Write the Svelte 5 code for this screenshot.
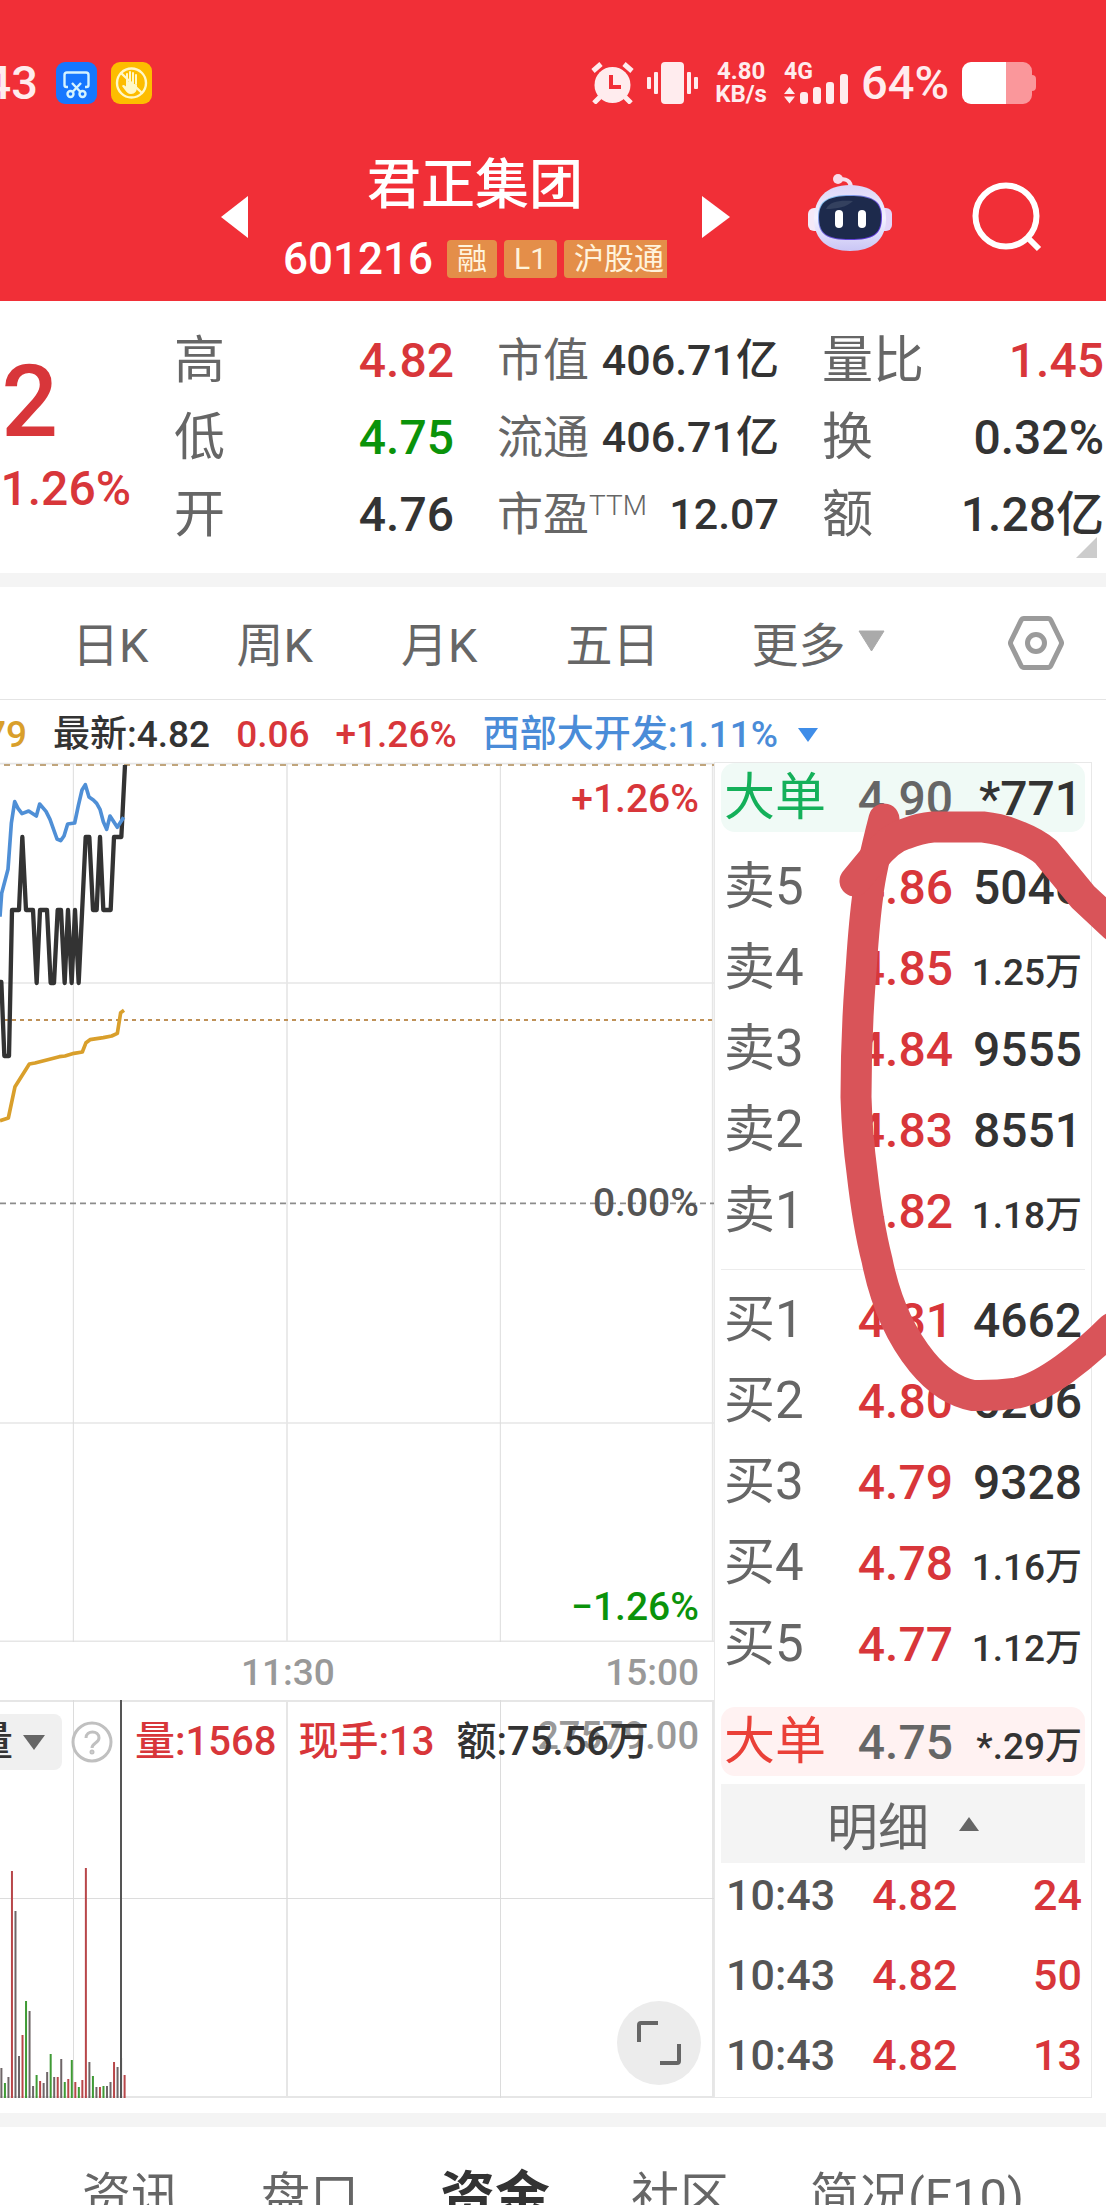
<script>
	const badges = ['融', 'L1', '沪股通'];

	const quote = [
		[
			{ label: '高', value: '4.82', tone: 'up' },
			{ label: '低', value: '4.75', tone: 'down' },
			{ label: '开', value: '4.76' }
		],
		[
			{ label: '市值', value: '406.71亿' },
			{ label: '流通', value: '406.71亿' },
			{ label: '市盈', sup: 'TTM', value: '12.07' }
		],
		[
			{ label: '量比', value: '1.45', tone: 'up' },
			{ label: '换', value: '0.32%' },
			{ label: '额', value: '1.28亿' }
		]
	];

	const periods = ['日K', '周K', '月K', '五日'];

	const asks = [
		['卖5', '4.86', '5046'],
		['卖4', '4.85', '1.25万'],
		['卖3', '4.84', '9555'],
		['卖2', '4.83', '8551'],
		['卖1', '4.82', '1.18万']
	];

	const bids = [
		['买1', '4.81', '4662'],
		['买2', '4.80', '5206'],
		['买3', '4.79', '9328'],
		['买4', '4.78', '1.16万'],
		['买5', '4.77', '1.12万']
	];

	const trades = [
		['10:43', '4.82', '24'],
		['10:43', '4.82', '50'],
		['10:43', '4.82', '13']
	];

	// one entry per minute: r = up, g = down, n = flat
	const volume = [
		['n', 30], ['g', 15], ['n', 21], ['r', 227], ['n', 187], ['n', 42], ['r', 63], ['g', 97],
		['n', 87], ['n', 12], ['g', 23], ['r', 17], ['n', 15], ['n', 26], ['g', 44], ['n', 21],
		['r', 21], ['n', 39], ['g', 16], ['r', 19], ['g', 38], ['r', 16], ['g', 11], ['r', 18],
		['r', 230], ['n', 36], ['g', 22], ['n', 11], ['r', 11], ['g', 12], ['n', 12], ['n', 16],
		['r', 36], ['n', 31], ['n', 40], ['r', 23]
	];
	const fills = { r: '#b8474a', g: '#3f9a35', n: '#6f6668' };

	const sections = ['资讯', '盘口', '资金', '社区', '简况(F10)'];
	let section = $state('资金');
</script>

{#snippet book(rows)}
	<table class="book">
		<tbody>
			{#each rows as [level, price, amount]}
				<tr>
					<th scope="row">{level}</th>
					<td class="up">{price}</td>
					<td class:small={amount.endsWith('万')}>{amount}</td>
				</tr>
			{/each}
		</tbody>
	</table>
{/snippet}

<div class="page">
	<header>
		<div class="status">
			<div class="clock"><span>10:43</span></div>
			<svg class="app-icon" width="41" height="42" viewBox="0 0 41 42">
				<rect width="41" height="42" rx="9" fill="#1677ff" />
				<g fill="none" stroke="#d5f3ff" stroke-width="2.4">
					<path d="M12 25h-1.500a2 2 0 0 1-2-2V13a2.500 2.500 0 0 1 2.500-2.500h19a2.500 2.500 0 0 1 2.500 2.500v10a2 2 0 0 1-2 2H29" />
					<path d="M16 21l8.500 9M25 21l-8.500 9" />
					<circle cx="14.500" cy="32" r="3" />
					<circle cx="26.500" cy="32" r="3" />
				</g>
			</svg>
			<svg class="app-icon" width="41" height="42" viewBox="0 0 41 42">
				<rect width="41" height="42" rx="9" fill="#fdbd00" />
				<g fill="none" stroke="#fff8c8" stroke-width="2.400" stroke-linecap="round">
					<circle cx="20.500" cy="21" r="14.500" />
					<path d="M10 11l21 20" />
					<path d="M16 21V12M19 21V10M22 21V11M25 22V13" stroke-width="2" />
				</g>
				<path d="M15 19l11 4v2c0 4-2 7-6 7-3 0-4.500-2-6-4l-3-4c1-1.500 2.500-1 4 .5z" fill="#fff8c8" />
			</svg>

			<div class="indicators">
				<svg width="43" height="42" viewBox="0 0 43 42" fill="none" stroke="#ffecee">
					<circle cx="21.500" cy="23" r="18" fill="#ffecee" stroke="none" />
					<path d="M2 9l8-7M41 9l-8-7" stroke-width="5" />
					<path d="M9 35l-6 6M34 35l6 6" stroke-width="5" />
					<path d="M20 13v12h10" stroke="#f12f37" stroke-width="4" />
				</svg>
				<svg width="51" height="42" viewBox="0 0 51 42" fill="#ffecee">
					<rect x="14" width="23" height="42" rx="4" />
					<rect x="7" y="10" width="4" height="22" rx="1" />
					<rect y="15" width="4" height="12" rx="1" />
					<rect x="40" y="10" width="4" height="22" rx="1" />
					<rect x="47" y="15" width="4" height="12" rx="1" />
				</svg>
				<div class="speed"><b>4.80</b><b>KB/s</b></div>
				<div class="signal">
					<b>4G</b>
					<svg width="64" height="30" viewBox="0 0 64 30" fill="#ffecee">
						<path d="M0 20l5.500-7 5.500 7zM0 22.500l5.500 7 5.500-7z" />
						<rect x="16" y="18" width="8" height="12" rx="3" />
						<rect x="29" y="13" width="8" height="17" rx="3" />
						<rect x="42" y="8" width="8" height="22" rx="3" />
						<rect x="56" y="0" width="8" height="30" rx="3" />
					</svg>
				</div>
				<span class="percent">64%</span>
				<svg width="74" height="42" viewBox="0 0 74 42">
					<path d="M44 0h17a9 9 0 0 1 9 9v4a4 4 0 0 1 4 4v8a4 4 0 0 1-4 4v4a9 9 0 0 1-9 9H44z" fill="#fa979b" />
					<path d="M9 0h35v42H9a9 9 0 0 1-9-9V9a9 9 0 0 1 9-9z" fill="#fff" />
				</svg>
			</div>
		</div>

		<div class="title-bar">
			<button aria-label="上一只">
				<svg width="27" height="42" viewBox="0 0 27 42"><path d="M27 0v42L0 21z" fill="#fff" /></svg>
			</button>
			<div class="title">
				<h1>君正集团</h1>
				<div class="code">
					<span>601216</span>
					{#each badges as badge}
						<small>{badge}</small>
					{/each}
				</div>
			</div>
			<button aria-label="下一只">
				<svg width="28" height="42" viewBox="0 0 28 42"><path d="M0 0v42l28-21z" fill="#fff" /></svg>
			</button>
			<button class="robot" aria-label="智能助手">
				<svg width="84" height="78" viewBox="0 0 84 78">
					<defs>
						<linearGradient id="shell" x1="0" y1="0" x2="0" y2="1">
							<stop offset="0" stop-color="#dcd6f8" />
							<stop offset=".5" stop-color="#f3f1ff" />
							<stop offset="1" stop-color="#c9c5f5" />
						</linearGradient>
						<linearGradient id="rim" x1="0" y1="0" x2="1" y2="1">
							<stop offset="0" stop-color="#8fe6f5" />
							<stop offset=".5" stop-color="#6a55d8" />
							<stop offset="1" stop-color="#5a2fd8" />
						</linearGradient>
					</defs>
					<path d="M31 6c7-2 12 1 12 8" fill="none" stroke="#f6dfee" stroke-width="4" />
					<circle cx="30" cy="5" r="5" fill="#f8dcea" />
					<rect x="0" y="34" width="14" height="23" rx="6" fill="#f4e9f8" />
					<rect x="70" y="34" width="14" height="23" rx="6" fill="#e3d6f8" />
					<path d="M42 11c24 0 36 14 36 34 0 21-14 32-36 32S6 66 6 45c0-20 12-34 36-34z" fill="url(#shell)" />
					<path d="M42 21c21 0 32 5 32 22 0 18-9 23-32 23S10 61 10 43c0-17 11-22 32-22z" fill="url(#rim)" />
					<path d="M42 22c21 0 31 5 31 21 0 17-8 22-31 22s-31-5-31-22c0-16 10-21 31-21z" fill="#1d2a4c" />
					<path d="M18 35c4-8 14-9 27-8-6 6-16 8-27 8z" fill="#34415f" />
					<rect x="27" y="36" width="8" height="18" rx="4" fill="#fff" />
					<rect x="50" y="36" width="8" height="18" rx="4" fill="#fff" />
				</svg>
			</button>
			<button aria-label="搜索">
				<svg width="70" height="70" viewBox="0 0 70 70" fill="none" stroke="#fff" stroke-width="6">
					<circle cx="34" cy="34" r="30.500" />
					<path d="M55 55l12 12" />
				</svg>
			</button>
		</div>
	</header>

	<section class="quote">
		<div class="latest up">
			<strong>4.82</strong>
			<span>+1.26%</span>
		</div>
		{#each quote as column}
			<dl>
				{#each column as item}
					<div>
						<dt>{item.label}{#if item.sup}<sup>{item.sup}</sup>{/if}</dt>
						<dd class={item.tone}>{item.value}</dd>
					</div>
				{/each}
			</dl>
		{/each}
		<svg class="corner" width="21" height="21" viewBox="0 0 21 21"><path d="M21 0v21H0z" fill="#ccc" /></svg>
	</section>

	<nav class="periods">
		{#each periods as period}
			<button>{period}</button>
		{/each}
		<button class="more">
			更多
			<svg width="27" height="22" viewBox="0 0 27 22"><path d="M1 1h25L13.500 21z" fill="#aaa" stroke="#aaa" stroke-linejoin="round" /></svg>
		</button>
		<button class="settings" aria-label="设置">
			<svg width="56" height="54" viewBox="0 0 56 54" fill="none" stroke="#9b9b9b" stroke-width="5" stroke-linejoin="round">
				<path d="M16 2.500h24q2 0 3 2L53 25q1 2 0 4L43 49.500q-1 2-3 2H16q-2 0-3-2L3 29q-1-2 0-4L13 4.500q1-2 3-2z" />
				<circle cx="28" cy="27" r="8.500" />
			</svg>
		</button>
	</nav>

	<div class="ticker">
		<div class="average"><span>均价:4.79</span></div>
		<span>最新:4.82</span>
		<span class="up">0.06</span>
		<span class="up">+1.26%</span>
		<button class="sector">
			西部大开发:1.11%
			<svg width="20" height="14" viewBox="0 0 20 14"><path d="M0 0h20L10 14z" fill="#3f8de8" /></svg>
		</button>
	</div>

	<main>
		<div class="charts">
			<div class="price-chart">
				<svg viewBox="0 66 2142 2640" fill="none">
					<g stroke="#e6e6e6" stroke-width="5">
						<path d="M0 71H2142M0 729H2142M0 2049H2142M0 2704H2142" />
						<path d="M861 71V2706M2138 71V2706" />
						<path d="M220 71V2706M1501 71V2706" stroke-width="3" stroke="#dcdcdc" />
					</g>
					<path d="M12 75H2142" stroke="#c0a57c" stroke-width="6" stroke-dasharray="18 18" />
					<path d="M12 840H2142" stroke="#bf9158" stroke-width="6" stroke-dasharray="12 12" />
					<path d="M0 1390H2142" stroke="#8c8c8c" stroke-width="5" stroke-dasharray="18 12" />
					<g stroke-linejoin="round">
						<path
							d="M0 1142L25 1134 45 1040 88 972 105 969 178 950 195 948 222 940 247 936 258 908 270 899 310 893 335 888 352 880 362 818 372 811"
							stroke="#d99f2b"
							stroke-width="11"
						/>
						<path
							d="M0 726H4L13 948H27L36 510H57L67 291 78 510H99L110 729 120 510H141L152 729H162L173 510H183L194 729 204 510 215 729 225 510 236 729 257 291H268L279 510H290L300 291 310 510H332L342 291H364L375 75"
							stroke="#333"
							stroke-width="13"
						/>
						<path
							d="M0 530L5 460 24 388 34 250 44 185 54 205 66 221 86 213 109 228 119 192 138 214 150 238 171 297 182 302 192 288 203 252 224 249 235 197 246 150 256 134 267 171 280 180 290 190 300 208 310 245 320 268 330 228 352 262 371 232"
							stroke="#4f8fd6"
							stroke-width="11"
						/>
					</g>
				</svg>
				<div class="scale">
					<span class="up">+1.26%</span>
					<span>0.00%</span>
					<span class="down">−1.26%</span>
				</div>
			</div>

			<div class="time-axis"><span></span><span>11:30</span><span>15:00</span></div>

			<div class="volume-chart">
				<svg viewBox="0 0 714 398" fill="none">
					<g stroke="#e6e6e6" stroke-width="2">
						<path d="M0 1H714M0 397H714M287 0V398M713 0V398" />
						<path d="M0 198.500H714M73.500 0V398M500.500 0V398" stroke-width="1" stroke="#dcdcdc" />
					</g>
					{#each volume as [kind, height], i}
						<rect x={0.4 + i * 3.52} y={398 - height} width="2" {height} fill={fills[kind]} />
					{/each}
					<path d="M121 0V398" stroke="#555" stroke-width="2" />
				</svg>
				<span class="peak">27579.00</span>
				<div class="volume-info">
					<button class="indicator">
						<span>成交量</span>
						<svg width="22" height="15" viewBox="0 0 22 15"><path d="M0 0h22L11 15z" fill="#666" /></svg>
					</button>
					<button aria-label="说明">
						<svg width="42" height="42" viewBox="0 0 42 42" fill="none" stroke="#c0c0c0" stroke-width="3">
							<circle cx="21" cy="21" r="19" />
							<path d="M15 17c0-8 13-8 13 0 0 5-7 5-7 10" />
							<circle cx="21" cy="31" r="1" />
						</svg>
					</button>
					<span class="up">量:1568</span>
					<span class="up">现手:13</span>
					<span>额:75.56万</span>
				</div>
				<button class="expand" aria-label="全屏">
					<svg width="44" height="44" viewBox="0 0 44 44" fill="none" stroke="#666" stroke-width="4">
						<path d="M2 21V4q0-2 2-2h17M42 23v17q0 2-2 2H23" />
					</svg>
				</button>
			</div>
		</div>

		<aside>
			<div class="block sell"><span>大单</span><span>4.90</span><span>*771</span></div>
			{@render book(asks)}
			<hr />
			{@render book(bids)}
			<div class="block buy"><span>大单</span><span>4.75</span><span class="small">*.29万</span></div>
			<button class="details">
				明细
				<svg width="20" height="14" viewBox="0 0 20 14"><path d="M10 0l10 14H0z" fill="#666" /></svg>
			</button>
			<table class="trades">
				<tbody>
					{#each trades as [time, price, lots]}
						<tr><td>{time}</td><td class="up">{price}</td><td class="up">{lots}</td></tr>
					{/each}
				</tbody>
			</table>
			<svg class="marker" width="392" height="660" viewBox="714 762 392 660">
				<path
					d="M884 819C876 850 870 875 868 894C863 930 862 960 860 984Q856 1040 856 1097C857 1130 859 1150 862 1172Q868 1225 877 1260C885 1300 900 1335 922 1362Q945 1390 973 1395.500Q995 1396 1017 1393C1045 1387 1083 1357 1112 1328"
				/>
				<path d="M855 881L874 858Q890 838 905 834Q920 828 933 827H983Q1002 829 1020 837 1035 843 1046 852L1083 897 1114 926" />
			</svg>
		</aside>
	</main>

	<nav class="sections">
		{#each sections as name}
			<button class:active={name === section} onclick={() => (section = name)}>{name}</button>
		{/each}
	</nav>
</div>

<style>
	:global(body) {
		background: #fff;
	}

	.page {
		overflow: hidden;
		font-family: Roboto, 'Noto Sans CJK SC', sans-serif;
		font-weight: 500;
		color: #333;
	}

	button {
		display: flex;
		align-items: center;
		flex: none;
		margin: 0;
		padding: 0;
		border: none;
		background: none;
		font: inherit;
		color: inherit;
		cursor: pointer;
	}

	svg {
		display: block;
		flex: none;
	}

	.up {
		color: #d8363a;
	}

	.down {
		color: #0a930a;
	}

	/* header */
	header {
		background: #f12f37;
		color: #fff;
	}

	.status {
		display: flex;
		align-items: center;
		height: 42px;
		padding: 62px 70px 29px 0;
		color: #ffecee;
	}

	.clock {
		display: flex;
		justify-content: flex-end;
		width: 38px;
		margin-right: 18px;
		overflow: hidden;
		font-size: 47px;
		line-height: 52px;
	}

	.app-icon {
		margin-right: 14px;
	}

	.indicators {
		display: flex;
		align-items: center;
		gap: 13px;
		margin-left: auto;
	}

	.speed,
	.signal {
		display: flex;
		flex-direction: column;
		justify-content: space-between;
		height: 46px;
		margin-left: 4px;
		font-size: 24px;
		line-height: 23px;
	}

	.speed {
		align-items: center;
	}

	.signal b {
		margin-bottom: -8px;
		font-size: 23px;
		line-height: 20px;
	}

	.signal {
		height: 42px;
	}

	.percent {
		font-size: 47px;
		line-height: 52px;
	}

	.title-bar {
		display: flex;
		align-items: center;
		height: 168px;
		padding: 0 64px 0 221px;
	}

	.title {
		display: flex;
		flex: 1;
		flex-direction: column;
		align-items: center;
		gap: 22px;
	}

	h1 {
		margin: 0;
		font-size: 54px;
		font-weight: 500;
		line-height: 62px;
	}

	.code {
		display: flex;
		align-items: center;
		gap: 7px;
		font-size: 44px;
		line-height: 38px;
	}

	.code span {
		margin-right: 7px;
		line-height: 40px;
	}

	.code small {
		padding: 0 10px;
		border-radius: 4px;
		background: #e48e49;
		color: #fff3dc;
		font-size: 30px;
		font-weight: 400;
	}

	.code small:last-child {
		padding-right: 3px;
		border-radius: 4px 0 0 4px;
	}

	.robot {
		margin: 0 80px 8px 78px;
	}

	/* quote */
	.quote {
		position: relative;
		display: grid;
		grid-template-columns: 131px 280px 282px 1fr;
		column-gap: 43px;
		padding: 21px 2px 20px 0;
		border-bottom: 14px solid #f4f4f4;
	}

	.latest {
		display: flex;
		flex-direction: column;
		align-items: flex-end;
		gap: 7px;
		padding-top: 28px;
		overflow: hidden;
		font-size: 48px;
		line-height: 56px;
	}

	.latest strong {
		margin-right: 73px;
		font-size: 100px;
		font-weight: 500;
		line-height: 104px;
	}

	dl {
		margin: 0;
	}

	dl div {
		display: flex;
		justify-content: space-between;
		font-size: 48px;
		line-height: 77px;
	}

	dt {
		display: flex;
		color: #666;
		font-size: 51px;
		font-weight: 400;
	}

	dd {
		margin: 0;
	}

	.quote dl:nth-of-type(2) div {
		font-size: 43px;
	}

	.quote dl:nth-of-type(2) dt {
		font-size: 46px;
	}

	.quote sup {
		font-size: 28px;
		font-weight: 300;
		line-height: 60px;
	}

	.corner {
		position: absolute;
		right: 9px;
		bottom: 15px;
	}

	/* period tabs */
	.periods {
		display: flex;
		align-items: center;
		gap: 88px;
		height: 112px;
		padding: 0 42px 0 72px;
		border-bottom: 1px solid #e4e4e4;
		color: #666;
		font-size: 47px;
		font-weight: 400;
	}

	.periods button {
		padding-bottom: 4px;
	}

	.more {
		gap: 12px;
		margin-left: 4px;
	}

	.periods .settings {
		margin-left: auto;
		padding-bottom: 0;
	}

	.ticker {
		display: flex;
		align-items: center;
		gap: 26px;
		height: 54px;
		padding-top: 8px;
		font-size: 37px;
		line-height: 54px;
		white-space: nowrap;
	}

	.average {
		display: flex;
		justify-content: flex-end;
		width: 27px;
		overflow: hidden;
		color: #d99f2b;
	}

	.sector {
		gap: 20px;
		color: #4a8cd8;
	}

	/* charts */
	main {
		display: grid;
		grid-template-columns: minmax(0, 1fr) 378px;
		align-items: start;
		margin-right: 14px;
	}

	.price-chart,
	.volume-chart {
		position: relative;
	}

	.charts > div > svg {
		width: 100%;
	}

	.scale {
		position: absolute;
		inset: 10px 15px 8px auto;
		display: flex;
		flex-direction: column;
		justify-content: space-between;
		align-items: flex-end;
		color: #555;
		font-size: 39px;
		line-height: 54px;
	}

	.time-axis {
		display: grid;
		grid-template-columns: 1fr 1fr 1fr;
		padding: 4px 15px 0 0;
		color: #999;
		font-size: 37px;
		line-height: 54px;
	}

	.time-axis span:nth-child(2) {
		padding-left: 8px;
	}

	.time-axis span:last-child {
		text-align: right;
	}

	.peak {
		position: absolute;
		top: 9px;
		right: 15px;
		color: #999;
		font-size: 38px;
		line-height: 54px;
	}

	.volume-info {
		position: absolute;
		top: 13px;
		left: 0;
		display: flex;
		align-items: center;
		gap: 22px;
		font-size: 40px;
		line-height: 58px;
		white-space: nowrap;
	}

	.indicator {
		justify-content: flex-end;
		gap: 10px;
		width: 62px;
		height: 56px;
		margin-right: -13px;
		padding-right: 17px;
		box-sizing: border-box;
		overflow: hidden;
		border-radius: 0 8px 8px 0;
		background: #f0f0f0;
	}

	.expand {
		position: absolute;
		right: 13px;
		bottom: 13px;
		justify-content: center;
		width: 84px;
		height: 84px;
		border-radius: 50%;
		background: #ececec;
	}

	/* order book */
	aside {
		position: relative;
		box-sizing: border-box;
		padding: 0 6px 10px;
		border: 1px solid #e8e8e8;
		font-size: 48px;
	}

	.block {
		display: grid;
		grid-template-columns: 118px 117px 129px;
		align-items: baseline;
		height: 69px;
		border-radius: 14px;
		line-height: 69px;
	}

	.block span {
		padding-right: 3px;
		text-align: right;
	}

	.block span:first-child {
		padding: 0 0 0 3px;
		font-size: 51px;
		font-weight: 400;
		text-align: left;
	}

	.block span:nth-child(2) {
		color: #666;
	}

	.sell {
		margin-bottom: 13px;
		background: #f0faf6;
	}

	.sell span:first-child {
		color: #14b05a;
	}

	.buy {
		margin: 24px 0 8px;
		background: #fff2f2;
	}

	.buy span:first-child {
		color: #ea4038;
	}

	table {
		width: 100%;
		border-collapse: collapse;
		table-layout: fixed;
	}

	th,
	td {
		padding: 0 3px 0 0;
		text-align: right;
		vertical-align: baseline;
	}

	.book tr {
		height: 81px;
	}

	.book th {
		width: 115px;
		padding: 5px 0 0 3px;
		color: #666;
		font-size: 51px;
		font-weight: 400;
		line-height: 74px;
		text-align: left;
	}

	.book td {
		padding-top: 5px;
		line-height: 74px;
	}

	.book td.up {
		width: 114px;
	}

	.book td.small,
	.block .small {
		font-size: 37px;
		line-height: 56px;
	}

	hr {
		margin: 19px 0 8px;
		border: none;
		border-top: 1px solid #ececec;
	}

	.details {
		justify-content: center;
		gap: 30px;
		width: 100%;
		height: 79px;
		background: #f4f4f4;
		color: #666;
		font-size: 51px;
		font-weight: 400;
	}

	.trades {
		font-size: 43px;
		line-height: 64px;
	}

	.trades td {
		padding-bottom: 16px;
	}

	.trades td:first-child {
		width: 107px;
		padding-left: 5px;
		color: #555;
		text-align: left;
	}

	.trades tr:last-child td {
		padding-bottom: 0;
	}

	.marker {
		position: absolute;
		top: -1px;
		left: -1px;
		fill: none;
		stroke: #d95459;
		stroke-width: 31;
		stroke-linecap: round;
		stroke-linejoin: round;
		pointer-events: none;
	}

	/* bottom sections */
	.sections {
		display: flex;
		align-items: flex-start;
		gap: 81px;
		height: 78px;
		margin-top: 15px;
		padding-left: 82px;
		overflow: hidden;
		border-top: 14px solid #f4f4f4;
		color: #666;
		font-size: 49px;
		font-weight: 400;
		line-height: 140px;
	}

	.sections .active {
		color: #333;
		font-size: 55px;
		font-weight: 700;
	}
</style>
